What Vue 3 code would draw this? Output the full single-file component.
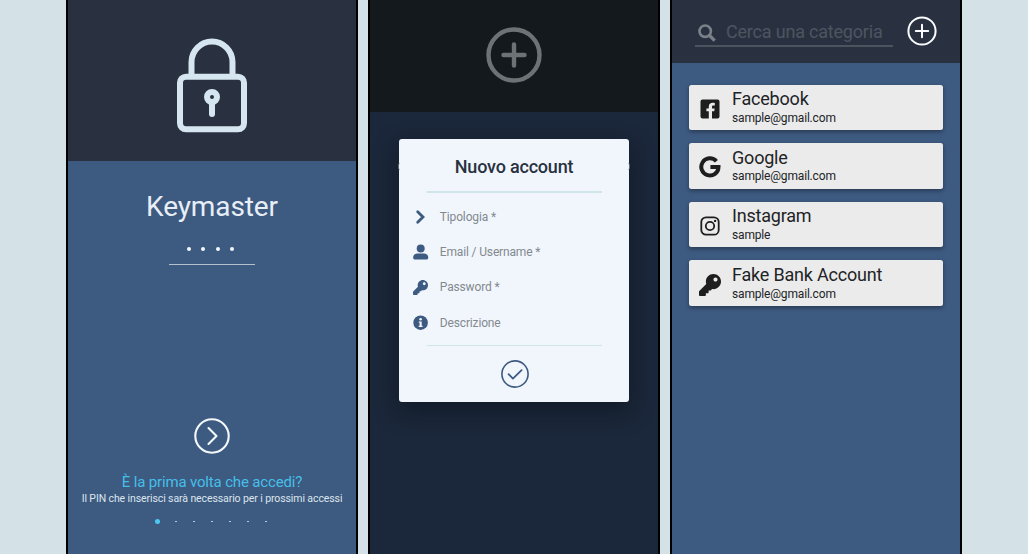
<script setup>
const key = 'M512 176c0 97.2-78.8 176-176 176-11.2 0-22.2-1.1-32.8-3.1l-24 27a24 24 0 0 1-18 8.100H224v40c0 13.300-10.700 24-24 24h-40v40c0 13.300-10.700 24-24 24H24c-13.300 0-24-10.700-24-24v-78.100c0-6.400 2.500-12.500 7-17L168.800 231.200C163.100 213.800 160 195.300 160 176 160 78.800 238.800 0 336 0s176 78.500 176 176zM336 128c0 26.500 21.500 48 48 48s48-21.500 48-48-21.500-48-48-48-48 21.500-48 48z'

const fields = [
  { label: 'Tipologia *', icon: 'chevron' },
  { label: 'Email / Username *', icon: 'user' },
  { label: 'Password *', icon: 'key' },
  { label: 'Descrizione', icon: 'info' },
]

const accounts = [
  { name: 'Facebook', login: 'sample@gmail.com', icon: 'facebook' },
  { name: 'Google', login: 'sample@gmail.com', icon: 'google' },
  { name: 'Instagram', login: 'sample', icon: 'instagram' },
  { name: 'Fake Bank Account', login: 'sample@gmail.com', icon: 'key' },
]
</script>

<template>
  <main class="stage">
    <section class="phone">
      <header class="lock-head">
        <svg class="lock" width="72" height="96" viewBox="0 0 72 96" fill="none" stroke="#d5e6f0" stroke-width="6">
          <path d="M15.500 38V24a20.500 20.500 0 0 1 41 0v14" />
          <rect x="4" y="38.700" width="64" height="52.600" rx="6" />
          <circle cx="36" cy="59" r="5" />
          <path d="M36 66v10" stroke-linecap="round" />
        </svg>
      </header>
      <div class="login">
        <h1>Keymaster</h1>
        <div class="pin"><i v-for="n in 4" :key="n"></i></div>
        <svg class="go" width="36" height="36" viewBox="0 0 36 36" fill="none" stroke="#f3f8fc" stroke-width="2.1">
          <circle cx="18" cy="18" r="16.700" />
          <path d="M14.500 10l8 8-8 8" stroke-linecap="round" stroke-linejoin="round" />
        </svg>
        <p class="first">È la prima volta che accedi?</p>
        <p class="hint">Il PIN che inserisci sarà necessario per i prossimi accessi</p>
        <div class="pages"><i v-for="n in 7" :key="n" :class="{ on: n === 1 }"></i></div>
      </div>
    </section>

    <section class="phone dim">
      <header class="add-head">
        <svg width="56" height="56" viewBox="0 0 56 56" fill="none" stroke="#6d7275" stroke-width="4.400">
          <circle cx="28" cy="28" r="25.500" />
          <path d="M28 17.500v21M17.500 28h21" stroke-linecap="round" />
        </svg>
      </header>
      <div class="modal">
        <h2>Nuovo account</h2>
        <hr />
        <ul>
          <li v-for="f in fields" :key="f.label" :class="f.icon">
            <svg v-if="f.icon === 'chevron'" width="16" height="16" viewBox="0 0 16 16" fill="none" stroke="#3d5a80" stroke-width="2.800">
              <path d="M4.700 2.800l5.300 5.200-5.300 5.200" stroke-linecap="round" />
            </svg>
            <svg v-else-if="f.icon === 'user'" width="16" height="16" viewBox="0 0 16 16" fill="#3d5a80">
              <circle cx="7.700" cy="4.600" r="4" />
              <path d="M4.200 9.400h7c2.300 0 4 1.700 4 4v.700c0 .8-.6 1.300-1.300 1.300H1.500c-.7 0-1.300-.5-1.300-1.300v-.7c0-2.300 1.700-4 4-4z" />
            </svg>
            <svg v-else-if="f.icon === 'key'" width="15" height="15" viewBox="0 0 512 512" fill="#3d5a80"><path :d="key" /></svg>
            <svg v-else width="16" height="16" viewBox="0 0 16 16">
              <circle cx="7.600" cy="7.700" r="7.300" fill="#3d5a80" />
              <circle cx="7.600" cy="4.200" r="1.300" fill="#f1f6fd" />
              <path d="M5.800 6.500h2.900v4.200h.9v1.300H5.700v-1.300h.9V7.800h-.8z" fill="#f1f6fd" />
            </svg>
            <span>{{ f.label }}</span>
          </li>
        </ul>
        <hr />
        <svg class="ok" width="28" height="28" viewBox="0 0 28 28" fill="none" stroke="#3d5a80" stroke-width="1.600">
          <circle cx="14" cy="14" r="13.100" />
          <path d="M7.600 14.200l4.300 4.400 8.700-8.400" stroke-linecap="round" stroke-linejoin="round" stroke-width="1.800" />
        </svg>
      </div>
    </section>

    <section class="phone">
      <header class="search-head">
        <div class="search">
          <svg width="18" height="18" viewBox="0 0 18 18" fill="none" stroke="#7b8189">
            <circle cx="7.200" cy="7.200" r="5.700" stroke-width="2.600" />
            <path d="M11.500 11.500l5.200 5.200" stroke-width="3.200" />
          </svg>
          <span>Cerca una categoria</span>
        </div>
        <svg class="plus" width="30" height="30" viewBox="0 0 30 30" fill="none" stroke="#fafcff" stroke-width="2">
          <circle cx="15" cy="15" r="13.600" />
          <path d="M15 8.800v12.400M8.800 15h12.400" stroke-linecap="round" />
        </svg>
      </header>
      <div class="list">
        <article v-for="a in accounts" :key="a.name">
          <span class="logo">
            <svg v-if="a.icon === 'facebook'" width="20" height="20" viewBox="0 0 20 20" fill="#1e1e1f">
              <path d="M2.500.500h15a2 2 0 0 1 2 2v15a2 2 0 0 1-2 2h-5.500V12.200h2.200l.5-2.800h-2.700V7.800c0-.9.4-1.400 1.500-1.400h1.300V4c-3.600-.7-6 .4-6 3.500v1.900H6.400v2.800h2.400v7.300H2.500a2 2 0 0 1-2-2v-15a2 2 0 0 1 2-2z" />
            </svg>
            <svg v-else-if="a.icon === 'google'" width="22" height="22" viewBox="0 0 22 22" fill="none" stroke="#1e1e1f" stroke-width="4">
              <path d="M17.400 5.300A8.600 8.600 0 1 0 19.500 11H11.400" />
            </svg>
            <svg v-else-if="a.icon === 'instagram'" width="20" height="20" viewBox="0 0 20 20" fill="none" stroke="#1e1e1f" stroke-width="1.800">
              <rect x="1.300" y="1.300" width="17.400" height="17.400" rx="4.800" />
              <circle cx="10" cy="10" r="4.200" />
              <circle cx="15.100" cy="4.900" r="1.200" fill="#1e1e1f" stroke="none" />
            </svg>
            <svg v-else width="22" height="22" viewBox="0 0 512 512" fill="#1e1e1f"><path :d="key" /></svg>
          </span>
          <div>
            <h3>{{ a.name }}</h3>
            <p>{{ a.login }}</p>
          </div>
        </article>
      </div>
    </section>
  </main>
</template>

<style>
body {
  margin: 0;
  overflow: hidden;
}
</style>

<style scoped>
* {
  box-sizing: border-box;
  margin: 0;
  padding: 0;
}
svg {
  display: block;
  flex: none;
}
.stage {
  display: flex;
  justify-content: center;
  gap: 10px;
  height: 554px;
  background: #d4e1e6;
  font-family: Roboto, "Liberation Sans", sans-serif;
}
.phone {
  width: 292px;
  height: 554px;
  border: solid #000;
  border-width: 0 2px;
  background: #3d5a80;
}
.lock-head {
  height: 161px;
  padding-top: 38px;
  background: #293140;
}
.lock {
  margin: 0 auto;
}
.login {
  display: flex;
  flex-direction: column;
  align-items: center;
  padding-top: 26.400px;
}
h1 {
  font-size: 28px;
  line-height: 40px;
  font-weight: 400;
  letter-spacing: -0.100px;
  color: #e8eef6;
}
.pin {
  display: flex;
  justify-content: center;
  gap: 10.300px;
  width: 86px;
  height: 37.600px;
  padding: 19.600px 3px 0 0;
  border-bottom: 1px solid #b3c2cc;
}
.pin i {
  width: 4px;
  height: 4px;
  border-radius: 50%;
  background: #f4f8fc;
}
.go {
  margin-top: 153px;
}
.first {
  margin-top: 18px;
  font-size: 15px;
  line-height: 20px;
  letter-spacing: -0.160px;
  color: #46bfe9;
}
.hint {
  font-size: 10.500px;
  line-height: 14px;
  letter-spacing: -0.100px;
  color: #dce5ee;
  white-space: nowrap;
}
.pages {
  display: flex;
  align-items: center;
  gap: 16.400px;
  height: 5px;
  margin-top: 13px;
}
.pages i {
  width: 1.700px;
  height: 1.700px;
  background: #b9c9d6;
}
.pages .on {
  width: 5px;
  height: 5px;
  margin: 0 -1.600px;
  border-radius: 50%;
  background: #4cc9f0;
}
.dim {
  background: #1b273a;
}
.add-head {
  display: flex;
  justify-content: center;
  height: 112px;
  padding-top: 27px;
  background: #14191d;
}
.modal {
  position: relative;
  width: 229.500px;
  height: 263px;
  margin: 27px 0 0 29.300px;
  border-radius: 3px;
  background: #f1f6fd;
  box-shadow: 0 8px 22px rgba(10, 15, 22, 0.55);
}
/* rounded ends of the field hidden behind the dialog */
.modal::before {
  content: "";
  position: absolute;
  left: -1px;
  right: -1px;
  top: 24px;
  height: 7px;
  border: solid #5c6672;
  border-width: 0 1px;
  border-radius: 2px;
}
h2 {
  padding-top: 16px;
  font-size: 18px;
  line-height: 24px;
  font-weight: 500;
  letter-spacing: -0.200px;
  text-align: center;
  color: #293140;
}
hr {
  width: 175px;
  height: 1.500px;
  margin: 12px 0 0 28px;
  border: 0;
  background: #cfe5ea;
}
ul {
  height: 141px;
  margin-top: 7px;
  list-style: none;
}
li {
  display: flex;
  align-items: center;
  gap: 10.500px;
  height: 35.200px;
  padding-left: 14px;
  font-size: 12px;
  letter-spacing: -0.150px;
  color: #83898e;
}
li.key {
  gap: 11.500px;
}
ul + hr {
  margin-top: 4px;
}
.ok {
  margin: 14px auto 0 101.500px;
}
.search-head {
  display: flex;
  height: 63px;
  padding-left: 23px;
  background: #293140;
}
.search {
  display: flex;
  gap: 10px;
  width: 198px;
  height: 47px;
  padding: 24px 0 0 3px;
  border-bottom: 2px solid #4b535e;
  font-size: 18px;
  line-height: 20px;
  letter-spacing: -0.200px;
  color: #4d5560;
  white-space: nowrap;
}
.search span {
  margin-top: -2.500px;
}
.plus {
  margin: 15.500px 0 0 14.300px;
}
.list {
  display: flex;
  flex-direction: column;
  gap: 13px;
  padding: 21.500px 17px 0;
}
article {
  display: flex;
  height: 45.600px;
  padding-left: 10px;
  border-radius: 2.500px;
  background: #ebebeb;
  box-shadow: 0 2px 4px rgba(0, 0, 0, 0.35);
  color: #222326;
}
.logo {
  display: flex;
  align-items: center;
  justify-content: center;
  width: 22px;
  padding-top: 3px;
  margin-right: 11px;
}
h3 {
  margin-top: 3.800px;
  font-size: 18px;
  line-height: 21px;
  font-weight: 400;
  letter-spacing: -0.200px;
}
article p {
  margin-top: 0.600px;
  font-size: 12px;
  line-height: 16px;
  letter-spacing: -0.170px;
}
</style>
